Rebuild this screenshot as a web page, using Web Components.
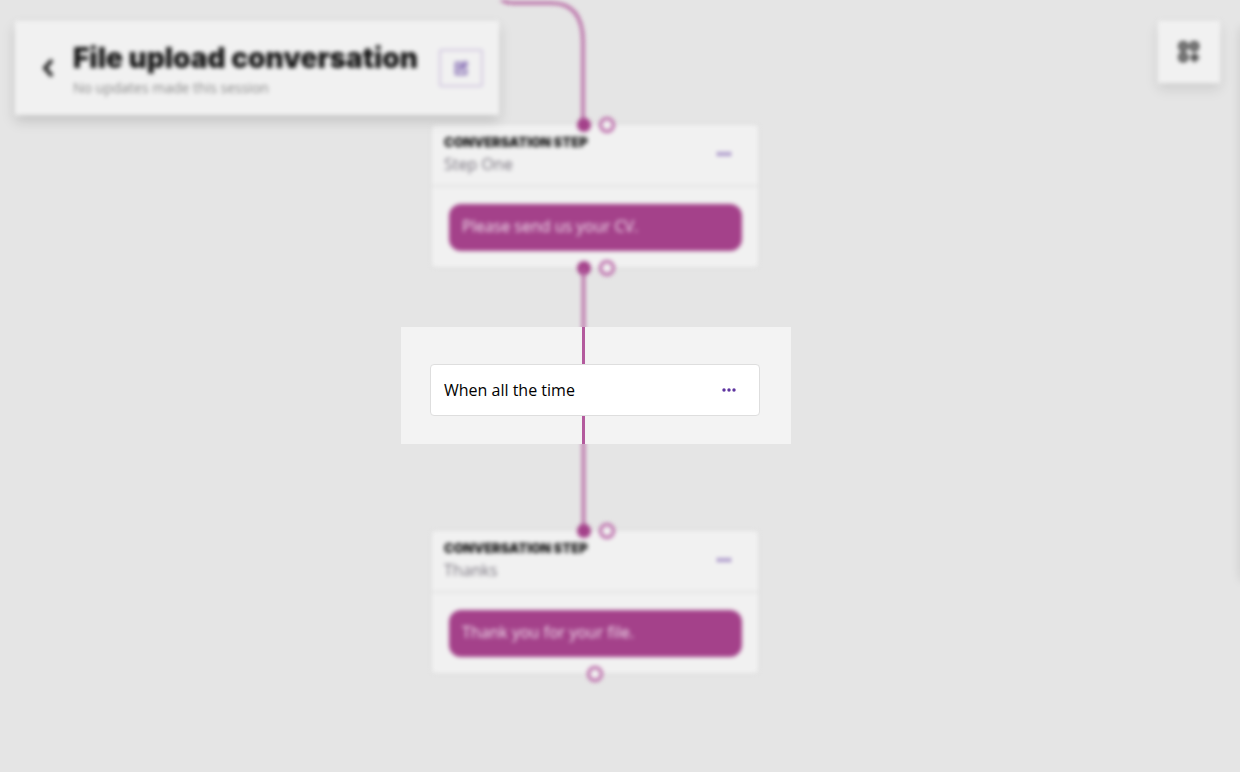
<!DOCTYPE html>
<html lang="en">
<head>
<meta charset="utf-8">
<meta name="viewport" content="width=device-width, initial-scale=1">
<title>File upload conversation</title>
<style>
  body { margin: 0; background: #e5e5e5; font-family: "Open Sans", "Noto Sans", sans-serif; }
</style>
</head>
<body>
<conversation-builder></conversation-builder>

<script>
const define = (name, html) => {
  const template = document.createElement('template');
  template.innerHTML = html;
  customElements.define(name, class extends HTMLElement {
    constructor() {
      super();
      this.attachShadow({ mode: 'open' }).append(template.content.cloneNode(true));
    }
  });
};

define('more-button', `
  <style>
    :host { display: block; }
    button { display: flex; padding: 8px; border: 0; background: none; color: #5f35a0; cursor: pointer; }
  </style>
  <button type="button" aria-label="More options">
    <svg width="14" height="4" viewBox="0 0 14 4" fill="currentColor">
      <circle cx="2" cy="2" r="1.7"/><circle cx="7" cy="2" r="1.7"/><circle cx="12" cy="2" r="1.7"/>
    </svg>
  </button>`);

/* Straight piece of the line that joins two nodes */
define('flow-line', `
  <style>
    :host { display: block; padding-left: 181px; }
    div { width: 3px; height: 100%; background: #b35a9d; }
  </style>
  <div></div>`);

define('flow-handles', `
  <style>
    :host { display: flex; justify-content: center; gap: 7px; }
    i { box-sizing: border-box; width: 16px; height: 16px; border-radius: 50%; }
    .in { border: 1px solid transparent; background: #a4418a content-box; background-clip: padding-box; }
    .out { border: 3px solid #b964a6; background: #f1f1f1; }
    :host([open]) .in { display: none; }
  </style>
  <i class="in"></i><i class="out"></i>`);

define('conversation-step', `
  <style>
    :host { display: block; position: relative; box-sizing: border-box; height: 142px; margin: 0 33px 0 31px;
            border-radius: 4px; background: #f1f1f1; box-shadow: 0 0 4px #0000000c; filter: blur(2px); }
    header { display: flex; align-items: center; justify-content: space-between; box-sizing: border-box;
             height: 62px; padding: 6px 19px 8px 12px; border-bottom: 2px solid #e3e3e3; }
    h2 { margin: 0; font: 900 13px/20px Inter, sans-serif; color: #111; }
    p { margin: 0; }
    .name { font-size: 16px; line-height: 24px; color: #77727d; }
    .bubble { margin: 17px 16px 0 17px; padding: 10px 13px 13px; border-radius: 12px; background: #a4418a;
              color: #f1e3ee; font-size: 16px; line-height: 24px; }
    flow-handles { position: absolute; left: 0; right: 0; }
    .top { top: -8px; }
  </style>
  <header>
    <div><h2>CONVERSATION STEP</h2><p class="name"><slot name="name"></slot></p></div>
    <more-button></more-button>
  </header>
  <p class="bubble"><slot></slot></p>
  <flow-handles class="top"></flow-handles>
  <slot name="exit"></slot>`);

define('flow-condition', `
  <style>
    :host { display: block; position: relative; background: #f3f3f3; }
    .before { height: 37px; }
    .after { height: 28px; }
    .card { display: flex; align-items: center; justify-content: space-between; box-sizing: border-box; height: 52px;
            margin: 0 31px 0 29px; padding: 0 15px 0 13px; border: 1px solid #dedede; border-radius: 4px;
            background: #fff; color: #000; font-size: 16px; line-height: 24px; }
  </style>
  <flow-line class="before"></flow-line>
  <div class="card"><span><slot></slot></span><more-button></more-button></div>
  <flow-line class="after"></flow-line>`);

define('conversation-title', `
  <style>
    :host { display: flex; align-items: center; box-sizing: border-box; height: 94px; padding: 0 16px;
            background: #f1f1f1; box-shadow: 0 6px 12px #00000028; filter: blur(2px); }
    button { display: flex; align-items: center; justify-content: center; padding: 0; background: none; cursor: pointer; }
    .back { width: 32px; height: 32px; margin-right: 10px; border: 0; color: #222; }
    .edit { width: 44px; height: 38px; margin-left: 21px; border: 2px solid #d2c9e0; border-radius: 2px; color: #9580bd; }
    h1 { margin: 0; padding-top: 4px; font: 900 28px/36px Inter, sans-serif; color: #151515; }
    p { margin: 0; font-size: 14px; line-height: 24px; color: #888; }
  </style>
  <button class="back" type="button" aria-label="Back">
    <svg width="14" height="20" viewBox="0 0 14 20" fill="none" stroke="currentColor" stroke-width="4"><path d="M12 2 5 10l7 8"/></svg>
  </button>
  <div><h1>File upload conversation</h1><p>No updates made this session</p></div>
  <button class="edit" type="button" aria-label="Edit">
    <svg width="16" height="16" viewBox="0 0 16 16" fill="none" stroke="currentColor" stroke-width="2.6">
      <path d="M9 3H3v11h10V8"/><path d="M6 10 14 2" stroke-width="5"/>
    </svg>
  </button>`);

define('add-block', `
  <style>
    :host { display: block; filter: blur(2px); }
    button { display: flex; align-items: center; justify-content: center; width: 62px; height: 62px; padding: 0;
             border: 0; background: #f1f1f1; color: #444; box-shadow: 0 6px 12px #0000001c; cursor: pointer; }
  </style>
  <button type="button" aria-label="Add block">
    <svg width="26" height="26" viewBox="0 0 26 26" fill="none" stroke="currentColor" stroke-width="3.4">
      <rect x="4" y="4" width="6.500" height="6.500" rx="2.500"/><rect x="15" y="4" width="6.500" height="6.500" rx="2.500"/>
      <rect x="4" y="15" width="6.500" height="6.500" rx="2.500"/><path d="M18.500 14v9M14 18.500h9"/>
    </svg>
  </button>`);

define('conversation-builder', `
  <style>
    :host { display: block; position: relative; min-height: 100vh; overflow: hidden; }
    main { display: flex; justify-content: center; padding-right: 48px; }
    .flow { display: flex; flex-direction: column; width: 390px; }
    .curve { display: block; filter: blur(2px); }
    .soft { filter: blur(2px); }
    .a { height: 64px; margin-bottom: -4px; }
    .b { height: 91px; margin-top: -4px; }
    flow-condition { z-index: 1; }
    .tools { position: absolute; top: 21px; left: 15px; right: 20px; display: flex; align-items: flex-start; justify-content: space-between; }
    .drawer { position: absolute; top: 24px; left: 100%; width: 240px; height: 552px; box-shadow: 0 4px 10px #0000001c; }
    .open { position: absolute; left: 0; right: 0; bottom: -9px; }
  </style>
  <main>
    <div class="flow">
      <svg class="curve" width="390" height="125" viewBox="0 0 390 125" fill="none" stroke="#b35a9d" stroke-width="3" aria-hidden="true">
        <path d="M90 -16Q96 3 112 3H150Q182 3 182 42V125"/>
      </svg>
      <conversation-step>
        <span slot="name">Step One</span>Please send us your CV.
        <flow-handles slot="exit" class="open"></flow-handles>
      </conversation-step>
      <flow-line class="soft a"></flow-line>
      <flow-condition>When all the time</flow-condition>
      <flow-line class="soft b"></flow-line>
      <conversation-step>
        <span slot="name">Thanks</span>Thank you for your file.
        <flow-handles slot="exit" class="open" open></flow-handles>
      </conversation-step>
    </div>
  </main>
  <div class="tools">
    <conversation-title></conversation-title>
    <add-block></add-block>
  </div>
  <aside class="drawer" aria-hidden="true"></aside>`);
</script>
</body>
</html>
